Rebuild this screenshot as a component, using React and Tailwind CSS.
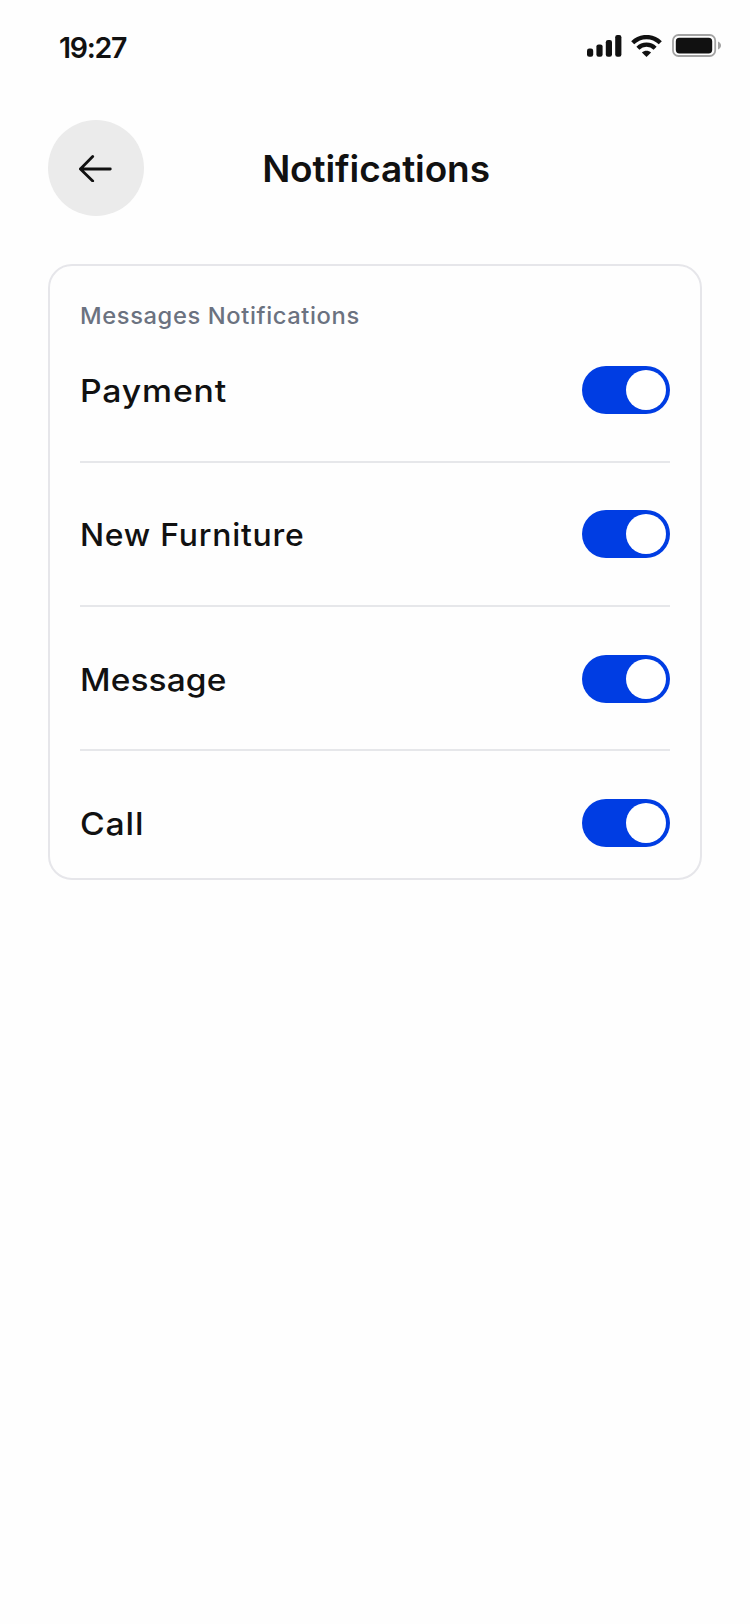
import React from "react";

const rows = ["Payment", "New Furniture", "Message", "Call"];

const labelStyles = {
  Payment: "tracking-[0.75px] scale-x-[1.09]",
  "New Furniture": "tracking-[0.75px] scale-x-[1.028]",
  Message: "tracking-[0.1px] scale-x-[1.08]",
  Call: "tracking-[0.75px] scale-x-[1.09]",
};

function SignalIcon() {
  return (
    <svg className="h-[22px] w-[35px]" viewBox="0 0 35 22" fill="#111">
      <rect x="0" y="13.6" width="6.2" height="8.2" rx="2.2" />
      <rect x="9.4" y="9.4" width="6.2" height="12.4" rx="2.2" />
      <rect x="18.8" y="5" width="6.2" height="16.8" rx="2.2" />
      <rect x="28.2" y="0" width="6.2" height="21.8" rx="2.2" />
    </svg>
  );
}

function WifiIcon() {
  return (
    <svg className="ml-[9px] h-[22px] w-[31px]" viewBox="0 0 31 22" fill="none">
      <path d="M1.7 7.8C9.4 .1 21.6 .1 29.3 7.8" stroke="#111" strokeWidth="4.3" />
      <path d="M6.9 13.2C11.7 8.5 19.3 8.5 24.1 13.2" stroke="#111" strokeWidth="4.3" />
      <path d="M15.5 22L10.9 17.4C13.5 15.2 17.5 15.2 20.1 17.4Z" fill="#111" />
    </svg>
  );
}

function BatteryIcon() {
  return (
    <svg className="ml-[10px] h-[23px] w-[50px]" viewBox="0 0 50 23">
      <rect x="1" y="1" width="42.2" height="21" rx="5.5" fill="none" stroke="#a3a3a3" strokeWidth="1.8" />
      <rect x="3.8" y="3.8" width="36.4" height="15.6" rx="3.6" fill="#111" />
      <path d="M46 7.5C50 9 50 14 46 15.5Z" fill="#a3a3a3" />
    </svg>
  );
}

function Toggle() {
  return (
    <button className="flex h-12 w-[88px] items-center justify-end rounded-full bg-[#003de3] p-1">
      <span className="size-10 rounded-full bg-white" />
    </button>
  );
}

export default function App() {
  return (
    <main className="h-[1624px] w-[750px] bg-[#fefefe] font-['Inter',sans-serif] text-[#111]">
      <div className="flex h-[120px] items-start justify-between pl-[59px] pr-[28px] pt-[34px]">
        <time className="pt-px text-[28.5px] leading-[26px] font-semibold tracking-[-1.3px]">19:27</time>
        <div className="flex items-center">
          <SignalIcon />
          <WifiIcon />
          <BatteryIcon />
        </div>
      </div>

      <header className="grid h-24 grid-cols-[96px_1fr_96px] items-center px-12">
        <button className="flex size-24 items-center justify-center rounded-full bg-[#ebebeb]">
          <svg className="h-[28px] w-[34px]" viewBox="0 0 34 28" fill="none" stroke="#111" strokeWidth="2.8" strokeLinecap="round" strokeLinejoin="round">
            <path d="M31.3 15H1.4M13.7 2.5L1.4 15L13.7 27" />
          </svg>
        </button>
        <h1 className="pt-[2px] pl-[2px] text-center text-[37px] leading-[48px] font-semibold tracking-[-0.1px]">Notifications</h1>
      </header>

      <section className="mt-12 ml-12 flex h-[616px] w-[654px] flex-col rounded-3xl border-2 border-[#e6e6ea] px-[30px] pt-[32px]">
        <h2 className="h-[68px] origin-left scale-x-[1.03] text-[23px] leading-[36px] font-medium tracking-[0.6px] text-[#6b7280]">Messages Notifications</h2>
        {rows.map((label, i) => (
          <React.Fragment key={label}>
            {i > 0 && <hr className="mt-[46.6px] mb-[47.74px] h-[2px] shrink-0 border-0 bg-[#e6e7ea]" />}
            <div className="flex h-12 shrink-0 items-center justify-between">
              <span className={"origin-left pt-[2px] text-[31px] leading-[46px] font-medium " + labelStyles[label]}>{label}</span>
              <Toggle />
            </div>
          </React.Fragment>
        ))}
      </section>
    </main>
  );
}
